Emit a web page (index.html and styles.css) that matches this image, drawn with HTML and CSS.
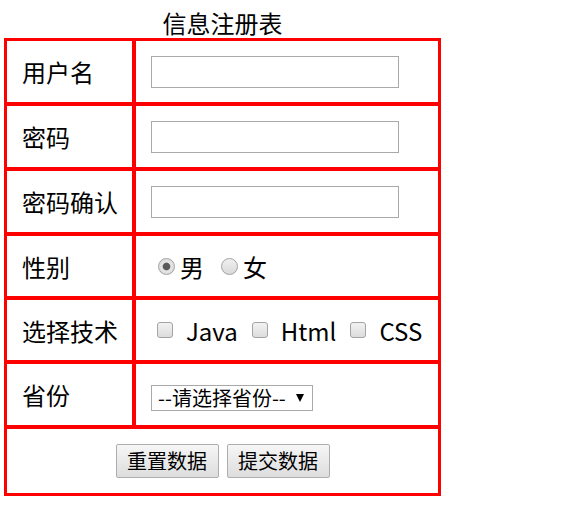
FILE: index.html
```html
<!DOCTYPE html>
<html lang="zh">
<head>
<meta charset="utf-8">
<title>信息注册表</title>
<link rel="stylesheet" href="styles.css">
</head>
<body>
<form class="reg">
  <table class="reg-table">
    <caption class="reg-title">信息注册表</caption>
    <tr>
      <td class="lbl">用户名</td>
      <td class="fld"><input class="txt" type="text"></td>
    </tr>
    <tr>
      <td class="lbl">密码</td>
      <td class="fld"><input class="txt" type="password"></td>
    </tr>
    <tr>
      <td class="lbl">密码确认</td>
      <td class="fld"><input class="txt" type="password"></td>
    </tr>
    <tr class="row-short">
      <td class="lbl">性别</td>
      <td class="fld">
        <div class="opts">
          <input class="rad rad-first" type="radio" name="sex" checked><span class="rad-text">男</span>
          <input class="rad rad-next" type="radio" name="sex"><span class="rad-text">女</span>
        </div>
      </td>
    </tr>
    <tr class="row-short">
      <td class="lbl">选择技术</td>
      <td class="fld">
        <div class="opts">
          <input class="chk chk-first" type="checkbox"><span class="chk-text">Java</span>
          <input class="chk chk-next" type="checkbox"><span class="chk-text">Html</span>
          <input class="chk chk-next" type="checkbox"><span class="chk-text">CSS</span>
        </div>
      </td>
    </tr>
    <tr>
      <td class="lbl">省份</td>
      <td class="fld">
        <span class="sel-wrap">
          <select class="sel">
            <option>--请选择省份--</option>
            <option>北京</option>
            <option>上海</option>
          </select>
        </span>
      </td>
    </tr>
    <tr class="row-tall">
      <td class="actions" colspan="2">
        <div class="btns">
          <button class="btn" type="reset">重置数据</button>
          <button class="btn" type="submit">提交数据</button>
        </div>
      </td>
    </tr>
  </table>
</form>
</body>
</html>
```

FILE: styles.css
```css
body {
  margin: 8px 8px 8px 4px;
  font-family: "Noto Sans CJK SC", "Noto Sans", sans-serif;
  font-size: 24px;
  color: #000;
  background: #fff;
}

.reg {
  margin: 0;
}

.reg-table {
  width: 437px;
  border: 1px solid #ff0000;
  border-spacing: 0;
  table-layout: fixed;
}

.reg-title {
  font-size: 24px;
  line-height: 30px;
  text-align: center;
}

.reg-table td {
  border: 2px solid #ff0000;
  padding: 0 15px;
  height: 65px;
  box-sizing: border-box;
  vertical-align: middle;
  line-height: 31px;
}

.reg-table .lbl {
  width: 129px;
  white-space: nowrap;
}

.reg-table .row-short td {
  height: 64px;
}

.reg-table .row-tall td {
  height: 68px;
}

.txt {
  display: block;
  width: 248px;
  height: 32px;
  box-sizing: border-box;
  margin: 0;
  padding: 0 4px;
  border: 1px solid #a9a9a9;
  font-family: inherit;
  font-size: 16px;
  background: #fff;
}

.opts {
  display: flex;
  align-items: center;
}

.rad {
  appearance: none;
  -webkit-appearance: none;
  width: 17px;
  height: 17px;
  margin: 0;
  box-sizing: border-box;
  border: 1px solid #a2a2a2;
  border-radius: 50%;
  background: linear-gradient(#f0f0f0, #d9d9d9);
  flex: none;
}

.rad:checked {
  background: radial-gradient(circle, #5a5a5a 0, #5a5a5a 3.3px, #e6e6e6 4.3px, #dcdcdc 8px);
}

.rad-first {
  margin-left: 7px;
}

.rad-next {
  margin-left: 17px;
}

.rad-text {
  margin-left: 5px;
}

.chk {
  appearance: none;
  -webkit-appearance: none;
  width: 16px;
  height: 16px;
  margin: 0;
  box-sizing: border-box;
  border: 1px solid #a3a3a3;
  border-radius: 3px;
  background: linear-gradient(#f2f2f2, #dcdcdc);
  flex: none;
}

.chk-first {
  margin-left: 6px;
}

.chk-next {
  margin-left: 14px;
}

.chk-text {
  margin-left: 13px;
}

.sel-wrap {
  position: relative;
  display: inline-block;
  vertical-align: middle;
  line-height: 0;
}

.sel {
  appearance: none;
  -webkit-appearance: none;
  width: 162px;
  height: 26px;
  margin: 0;
  box-sizing: border-box;
  padding: 0 0 0 6px;
  border: 1px solid #a9a9a9;
  border-radius: 0;
  background: #fff;
  color: #000;
  font-family: "Noto Sans CJK SC", sans-serif;
  font-size: 20px;
  line-height: 24px;
}

.sel-wrap::after {
  content: "";
  position: absolute;
  right: 9px;
  top: 9px;
  width: 0;
  height: 0;
  border-left: 4.5px solid transparent;
  border-right: 4.5px solid transparent;
  border-top: 8px solid #000;
  pointer-events: none;
}

.actions {
  text-align: center;
}

.btns {
  display: flex;
  justify-content: center;
  gap: 8px;
}

.btn {
  width: 103px;
  height: 34px;
  margin: 0;
  padding: 0;
  box-sizing: border-box;
  border: 1px solid #adadad;
  border-radius: 2px;
  background: linear-gradient(#f6f6f6, #dddddd);
  color: #000;
  font-family: "Noto Sans CJK SC", sans-serif;
  font-size: 20px;
  line-height: 30px;
}
```
